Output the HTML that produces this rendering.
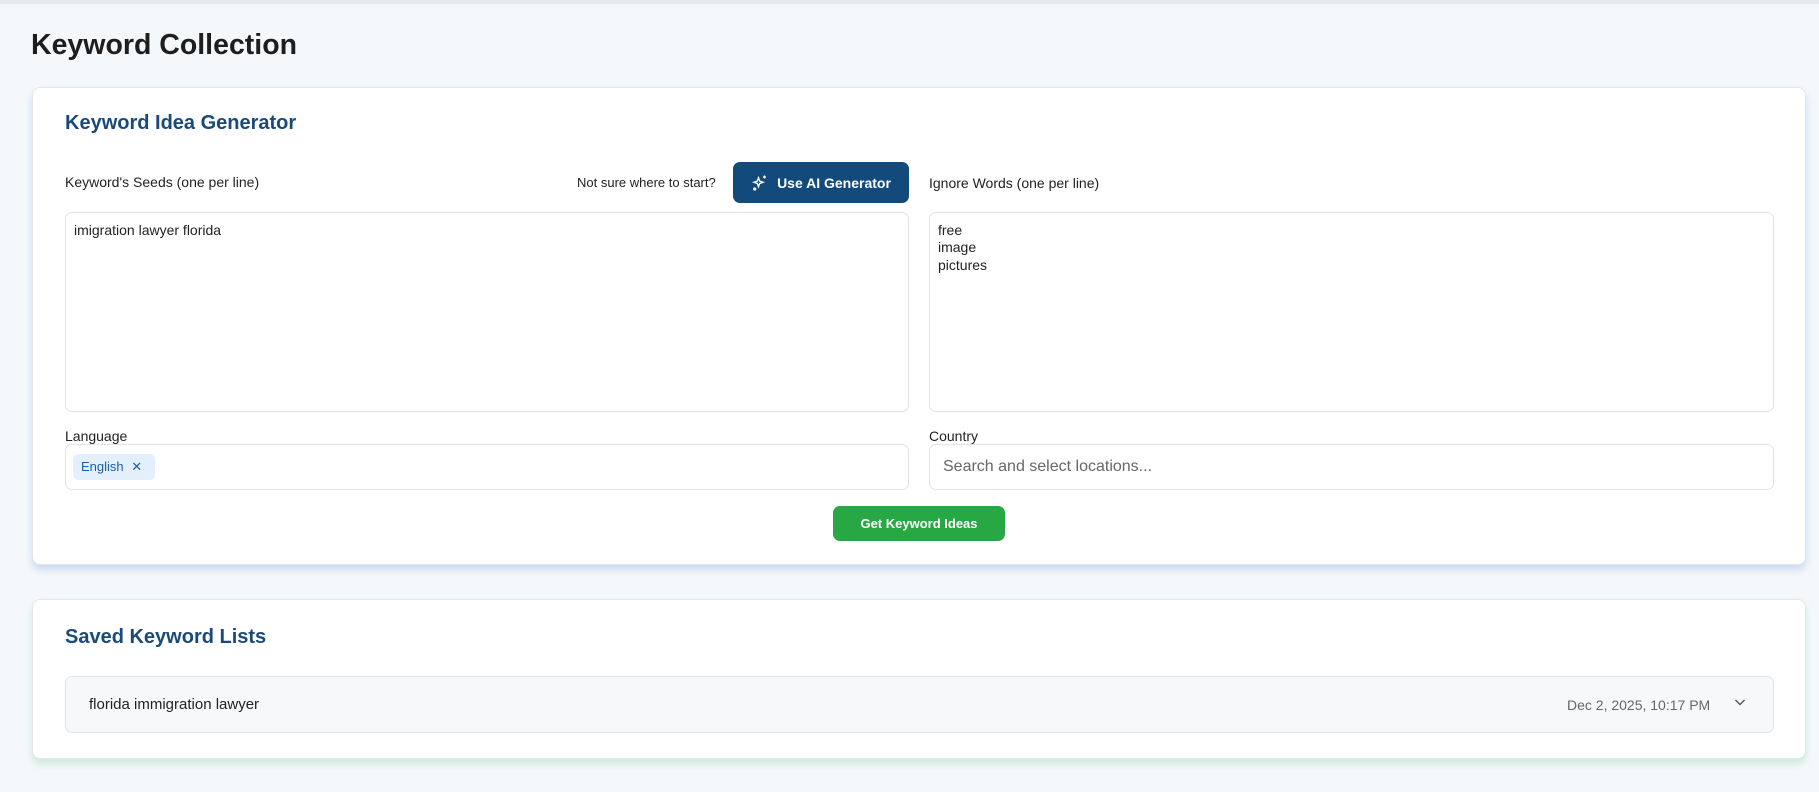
<!DOCTYPE html>
<html><head><meta charset="utf-8"><style>
*{box-sizing:border-box;margin:0;padding:0}
body{width:1819px;height:792px;background:#f5f8fb;font-family:"Liberation Sans",sans-serif;color:#222;position:relative;overflow:hidden}
.top{position:absolute;left:0;top:0;width:1819px;height:4px;background:#e6eaee}
h1{position:absolute;left:31px;top:29px;font-size:28.5px;font-weight:bold;color:#1e1e1e}
.card{position:absolute;left:32px;width:1774px;background:#fff;border:1px solid #e2e6ea;border-radius:8px}
.c1{top:87px;height:478px;box-shadow:0 5px 8px rgba(120,160,220,.35)}
.c2{top:599px;height:160px;box-shadow:0 5px 8px rgba(120,200,150,.3)}
.h2{position:absolute;font-size:20px;font-weight:bold;color:#1a4a7a}
.lbl{position:absolute;font-size:14px;color:#222}
.box{position:absolute;border:1px solid #e0e3e7;border-radius:7px;background:#fff}
.ta{font-size:14px;line-height:17.4px;padding:9px 0 0 8px}
.btn{position:absolute;border-radius:7px;color:#fff;font-weight:bold;display:flex;align-items:center;justify-content:center}
</style></head><body>
<div class="top"></div>
<h1>Keyword Collection</h1>
<div class="card c1"></div>
<div class="h2" style="left:65px;top:112px">Keyword Idea Generator</div>
<div class="lbl" style="left:65px;top:174px">Keyword's Seeds (one per line)</div>
<div class="lbl" style="left:577px;top:175px;font-size:13px">Not sure where to start?</div>
<div class="btn" style="left:733px;top:162px;width:176px;height:41px;background:#134a7c;font-size:14px">
<svg width="18" height="18" viewBox="0 0 24 24" fill="none" stroke="#fff" stroke-width="1.8" style="margin-right:8px"><path d="M10 5l1.6 4.4L16 11l-4.4 1.6L10 17l-1.6-4.4L4 11l4.4-1.6z"/><path d="M18 2v4M16 4h4"/><circle cx="5" cy="20" r="1.3"/></svg>Use AI Generator</div>
<div class="lbl" style="left:929px;top:175px">Ignore Words (one per line)</div>
<div class="box ta" style="left:65px;top:212px;width:844px;height:200px">imigration lawyer florida</div>
<div class="box ta" style="left:929px;top:212px;width:845px;height:200px">free<br>image<br>pictures</div>
<div class="lbl" style="left:65px;top:428px">Language</div>
<div class="lbl" style="left:929px;top:428px">Country</div>
<div class="box" style="left:65px;top:444px;width:844px;height:46px"></div>
<div style="position:absolute;left:73px;top:454px;width:82px;height:26px;background:#e3effc;border-radius:5px;color:#1b5fa8;font-size:13px;line-height:26px;padding-left:8px">English <span style="margin-left:4px">✕</span></div>
<div class="box" style="left:929px;top:444px;width:845px;height:46px;font-size:16px;color:#666;padding:13px 0 0 13px">Search and select locations...</div>
<div class="btn" style="left:833px;top:506px;width:172px;height:35px;background:#28a745;font-size:13px">Get Keyword Ideas</div>
<div class="card c2"></div>
<div class="h2" style="left:65px;top:626px">Saved Keyword Lists</div>
<div class="box" style="left:65px;top:676px;width:1709px;height:57px;background:#f7f8fa"></div>
<div class="lbl" style="left:89px;top:696px;font-size:15px">florida immigration lawyer</div>
<div class="lbl" style="left:1567px;top:697px;font-size:14px;color:#666">Dec 2, 2025, 10:17 PM</div>
<svg style="position:absolute;left:1733px;top:695px" width="14" height="14" viewBox="0 0 14 14" fill="none" stroke="#555" stroke-width="1.4"><path d="M2.5 5l4.5 4.5 4.5-4.5"/></svg>
</body></html>
